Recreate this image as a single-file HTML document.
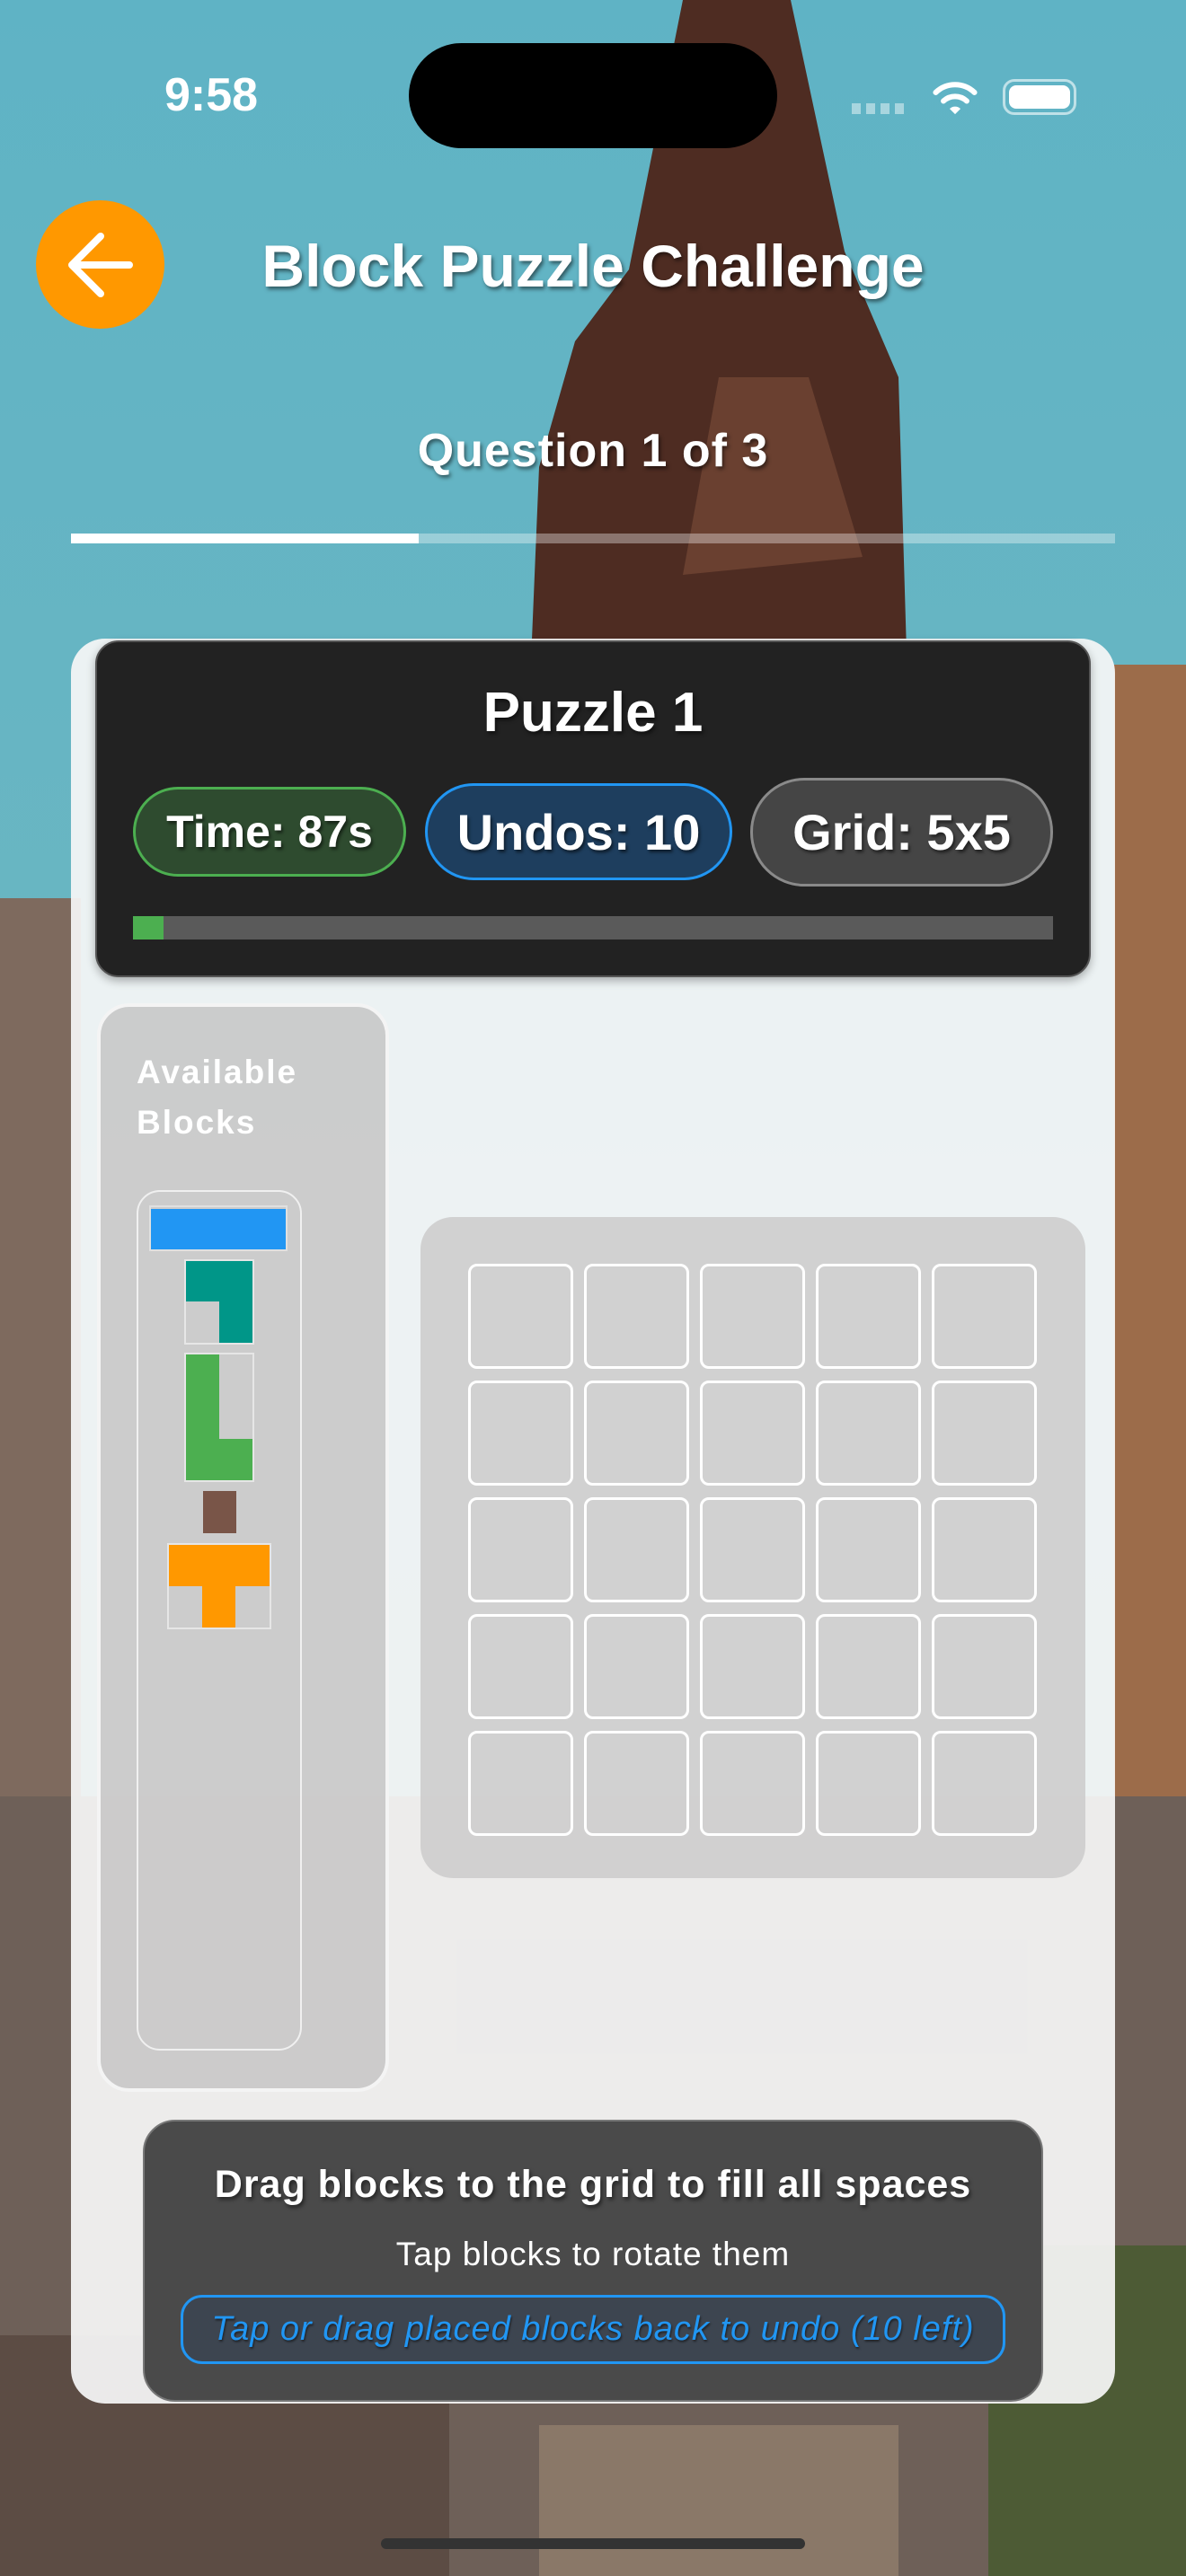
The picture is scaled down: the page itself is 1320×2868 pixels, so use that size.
<!DOCTYPE html>
<html><head><meta charset="utf-8"><style>
*{margin:0;padding:0;box-sizing:border-box}
body{width:1320px;height:2868px;position:relative;overflow:hidden;font-family:"Liberation Sans",sans-serif;background:#62b0c0}
.abs{position:absolute}
.sh{text-shadow:2px 3px 4px rgba(0,0,0,.5)}
.chip{position:absolute;border-radius:60px;color:#fff;font-weight:bold;font-size:50px;display:flex;align-items:center;justify-content:center;text-shadow:2px 3px 3px rgba(0,0,0,.5)}
.cell{position:absolute;width:117px;height:117px;border:3px solid #fff;border-radius:10px}
.b{position:absolute;width:37px;height:45px}
</style></head><body>
<div class="abs" style="left:0;top:0;width:1320px;height:2868px;background:linear-gradient(#5fb3c5,#6ab6c2 40%,#7fb3b3)"></div>
<svg class="abs" style="left:0;top:0" width="1320" height="2868">
<polygon points="760,0 880,0 940,280 1000,420 1010,760 590,760 600,520 640,380 700,300" fill="#4e2c22"/>
<polygon points="800,420 900,420 960,620 760,640" fill="#6a4030"/>
<rect x="1240" y="740" width="80" height="1300" fill="#9c6c4a"/>
<rect x="0" y="1000" width="90" height="1000" fill="#7e6a5e"/>
<rect x="0" y="2000" width="1320" height="868" fill="#6e6058"/>
<rect x="1100" y="2500" width="220" height="368" fill="#4d5b35"/>
<rect x="0" y="2600" width="500" height="268" fill="#5c4c44"/>
<rect x="600" y="2700" width="400" height="168" fill="#8a7868"/>
</svg>
<div class="abs" style="left:183px;top:76px;font-size:52px;color:#fff;font-weight:bold">9:58</div>
<div class="abs" style="left:455px;top:48px;width:410px;height:117px;border-radius:59px;background:#000"></div>
<div class="abs" style="left:948px;top:115px;width:60px;height:12px;background:repeating-linear-gradient(90deg,rgba(255,255,255,.45) 0 10px,transparent 10px 16px)"></div>
<svg class="abs" style="left:1038px;top:90px" width="50" height="38" viewBox="0 0 58 44"><path d="M4 15 A36 36 0 0 1 54 15" stroke="#fff" stroke-width="7" fill="none" stroke-linecap="round"/><path d="M14 26 A22 22 0 0 1 44 26" stroke="#fff" stroke-width="7" fill="none" stroke-linecap="round"/><path d="M22 36 L29 43 L36 36 A10 10 0 0 0 22 36Z" fill="#fff"/></svg>
<div class="abs" style="left:1116px;top:88px;width:82px;height:40px;border:3px solid rgba(255,255,255,.6);border-radius:13px;padding:4px"><div style="width:100%;height:100%;background:#fff;border-radius:8px"></div></div>
<div class="abs" style="left:40px;top:223px;width:143px;height:143px;border-radius:50%;background:#ff9800"></div>
<svg class="abs" style="left:40px;top:223px" width="143" height="143"><path d="M40 72 H104 M72 40 L40 72 L72 104" stroke="#fff" stroke-width="8" fill="none" stroke-linecap="round" stroke-linejoin="round"/></svg>
<div class="abs sh" style="left:180px;top:258px;width:960px;text-align:center;font-size:66px;font-weight:bold;color:#fff">Block Puzzle Challenge</div>
<div class="abs sh" style="left:0;top:472px;width:1320px;text-align:center;font-size:52px;font-weight:bold;color:#fff;letter-spacing:1px">Question 1 of 3</div>
<div class="abs" style="left:79px;top:594px;width:1162px;height:11px;background:rgba(255,255,255,.35)"></div>
<div class="abs" style="left:79px;top:594px;width:387px;height:11px;background:#fff"></div>
<div class="abs" style="left:79px;top:711px;width:1162px;height:1965px;border-radius:38px;background:rgba(246,246,246,.93)"></div>
<div class="abs" style="left:106px;top:713px;width:1108px;height:375px;border-radius:26px;background:#222;border:2px solid #555;box-shadow:0 4px 10px rgba(0,0,0,.3)"></div>
<div class="abs sh" style="left:106px;top:758px;width:1108px;text-align:center;font-size:62px;font-weight:bold;color:#fff">Puzzle 1</div>
<div class="chip" style="left:148px;top:876px;width:304px;height:100px;background:#2e4b2f;border:3px solid #4caf50">Time: 87s</div>
<div class="chip" style="left:473px;top:872px;width:342px;height:108px;background:#1e3e5e;border:3px solid #2196f3;font-size:56px">Undos: 10</div>
<div class="chip" style="left:835px;top:866px;width:337px;height:121px;background:#454545;border:3px solid #8a8a8a;font-size:56px">Grid: 5x5</div>
<div class="abs" style="left:148px;top:1020px;width:1024px;height:26px;background:#5a5a5a"></div>
<div class="abs" style="left:148px;top:1020px;width:34px;height:26px;background:#4caf50"></div>
<div class="abs" style="left:108px;top:1117px;width:325px;height:1212px;border-radius:36px;background:rgba(200,200,200,.9);border:4px solid #f4f4f4"></div>
<div class="abs" style="left:152px;top:1166px;font-size:37px;line-height:56px;font-weight:bold;color:#fff;letter-spacing:2px">Available<br>Blocks</div>
<div class="abs" style="left:152px;top:1325px;width:184px;height:958px;border-radius:26px;border:2px solid rgba(255,255,255,.7)"></div>
<div class="abs" style="left:166px;top:1342px;width:154px;height:51px;border:2px solid rgba(255,255,255,.4)"></div>
<div class="b" style="left:168px;top:1346px;width:150px;background:#2196f3"></div>
<div class="abs" style="left:205px;top:1402px;width:78px;height:95px;border:2px solid rgba(255,255,255,.5)"></div>
<div class="b" style="left:207px;top:1404px;width:74px;background:#009688"></div>
<div class="b" style="left:244px;top:1449px;height:46px;background:#009688"></div>
<div class="abs" style="left:205px;top:1506px;width:78px;height:144px;border:2px solid rgba(255,255,255,.5)"></div>
<div class="b" style="left:207px;top:1508px;height:140px;background:#4caf50"></div>
<div class="b" style="left:244px;top:1602px;height:46px;background:#4caf50"></div>
<div class="b" style="left:226px;top:1660px;height:47px;background:#795548"></div>
<div class="abs" style="left:186px;top:1718px;width:116px;height:96px;border:2px solid rgba(255,255,255,.5)"></div>
<div class="b" style="left:188px;top:1720px;width:112px;height:46px;background:#ff9800"></div>
<div class="b" style="left:225px;top:1766px;height:46px;background:#ff9800"></div>
<div class="abs" style="left:468px;top:1355px;width:740px;height:736px;border-radius:36px;background:rgba(205,205,205,.9)"></div>
<div id="g"></div>
<div class="abs" style="left:159px;top:2360px;width:1002px;height:314px;border-radius:36px;background:#4a4a4a;border:2px solid #777"></div>
<div class="abs sh" style="left:159px;top:2408px;width:1002px;text-align:center;font-size:43px;font-weight:bold;color:#fff;letter-spacing:1px">Drag blocks to the grid to fill all spaces</div>
<div class="abs" style="left:159px;top:2489px;width:1002px;text-align:center;font-size:37px;color:#fff;letter-spacing:1px">Tap blocks to rotate them</div>
<div class="abs" style="left:201px;top:2555px;width:918px;height:77px;border-radius:24px;border:3px solid #2196f3;background:#3d4550;color:#2196f3;font-style:italic;font-size:38px;letter-spacing:1px;display:flex;align-items:center;justify-content:center;text-shadow:1px 2px 2px rgba(0,0,0,.5)">Tap or drag placed blocks back to undo (10 left)</div>
<div class="abs" style="left:424px;top:2826px;width:472px;height:12px;border-radius:6px;background:#333"></div>
<script>
var h='';for(var r=0;r<5;r++)for(var c=0;c<5;c++)h+='<div class="cell" style="left:'+(521+c*129)+'px;top:'+(1407+r*130)+'px"></div>';
document.getElementById('g').innerHTML=h;
</script>
</body></html>
